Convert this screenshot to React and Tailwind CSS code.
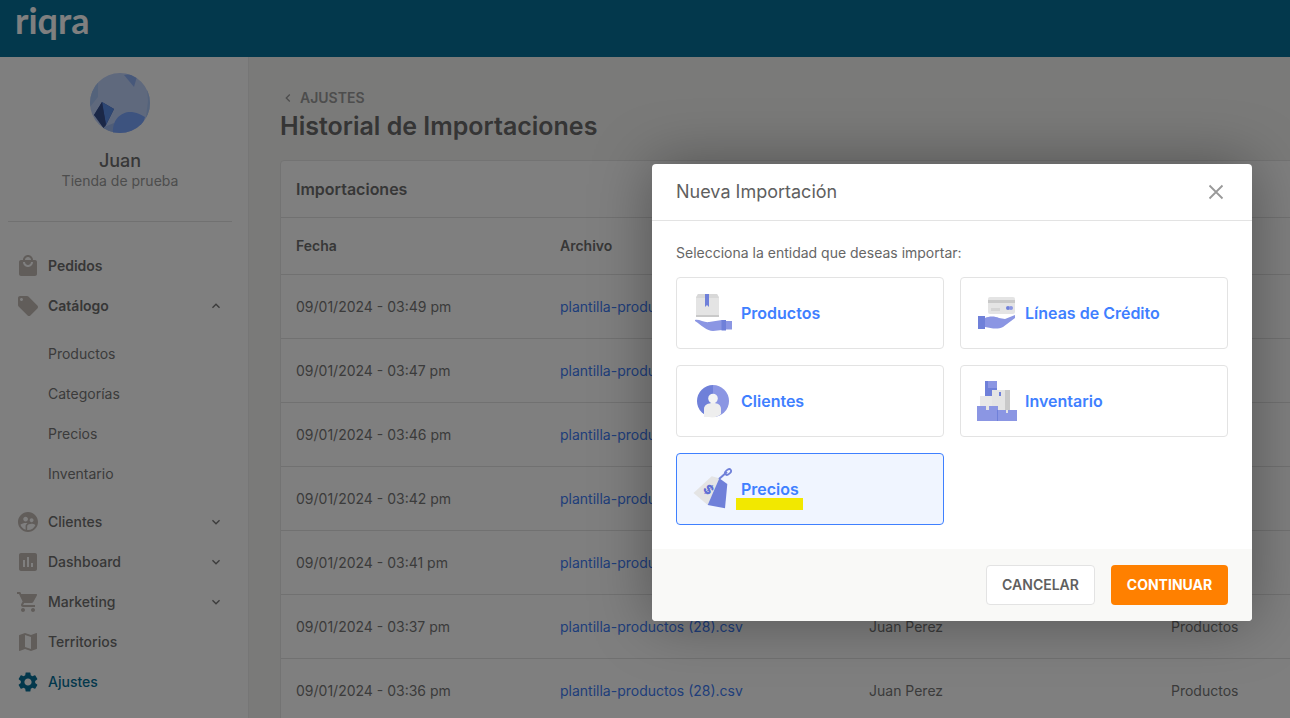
import React from "react";
import { MdLocalMall, MdLocalOffer, MdSupervisedUserCircle, MdAssessment, MdShoppingCart, MdMap, MdSettings, MdKeyboardArrowDown, MdKeyboardArrowUp, MdChevronLeft } from "react-icons/md";

const rows = ["03:49", "03:47", "03:46", "03:42", "03:41", "03:37", "03:36"];

function Nav({ icon: Icon, label, chevron, active, bold }) {
  return (
    <div className={`flex h-10 items-center text-sm ${bold ? "font-semibold" : "font-medium"} ${active ? "text-[#067099]" : "text-[#6f6f6f]"}`}>
      <Icon className={`w-6 h-6 mr-2 ${active ? "text-[#067099]" : "text-[#c2bab5]"}`} />
      <span className="flex-1">{label}</span>
      {chevron === "down" && <MdKeyboardArrowDown className="w-4 h-4 text-[#777]" />}
      {chevron === "up" && <MdKeyboardArrowUp className="w-4 h-4 text-[#777]" />}
    </div>
  );
}

function Sub({ label }) {
  return <div className="flex h-10 items-center pl-8 text-sm text-[#777]">{label}</div>;
}

function Avatar() {
  return (
    <svg width="60" height="60" viewBox="0 0 60 60" className="block">
      <defs><clipPath id="av"><circle cx="30" cy="30" r="30" /></clipPath></defs>
      <g clipPath="url(#av)">
        <rect width="60" height="60" fill="#bfd2fb" />
        <path d="M0 0H22L8 6 8 24 0 34Z" fill="#a9c6f7" />
        <path d="M34 2 48 0 44 14Z" fill="#8fb0f4" />
        <path d="M56 0H60V60H54L58 28Z" fill="#a9c6f7" />
        <path d="M4 42 12 29 24 36 16 52Z" fill="#3c56ad" />
        <path d="M12 29 24 36 16 52Z" fill="#5b8ee8" />
        <path d="M4 42 12 29 16 52 14 56Z" fill="#37508f" />
        <path d="M14 54 24 50 24 60H12Z" fill="#9fbbf0" />
        <path d="M23 60C22 46 32 38 42 39 49 40 53 43 55 44L50 60Z" fill="#7ba6ff" />
      </g>
    </svg>
  );
}

const BLUE = "#6f80d9";
const LIGHT = "#8b96e3";
const GRAY = "#e4e4e4";
const DARKG = "#c9c9c9";

function IconProductos() {
  return (
    <svg width="40" height="40" viewBox="0 0 40 40">
      <path d="M5 1H24L26 4V24H3V4Z" fill={GRAY} />
      <path d="M5 1H24L26 5H3Z" fill="#d8d8d8" />
      <rect x="3" y="22" width="23" height="2" fill={DARKG} />
      <path d="M12 1H16V14L14 12 12 14Z" fill={BLUE} />
      <path d="M2 27C6 26 12 30 16 29L29 27V37L20 38C14 38 8 32 2 28Z" fill={LIGHT} />
      <rect x="28.5" y="27" width="4.5" height="10.5" fill={BLUE} />
      <rect x="33" y="28" width="6" height="8.5" fill={LIGHT} />
    </svg>
  );
}

function IconCredito() {
  return (
    <svg width="40" height="40" viewBox="0 0 40 40">
      <rect x="11" y="4" width="27" height="17" rx="2" fill={GRAY} />
      <rect x="11" y="7" width="27" height="3" fill={DARKG} />
      <rect x="14" y="15" width="9" height="3" fill="#d4d4d4" />
      <circle cx="31" cy="15" r="2" fill={BLUE} />
      <circle cx="34" cy="15" r="2" fill={LIGHT} />
      <rect x="1" y="23" width="7" height="13" fill={BLUE} />
      <path d="M8 25C12 23 18 23 22 25L28 26 38 22 38 25 26 34C20 37 14 35 8 34Z" fill={LIGHT} />
    </svg>
  );
}

function IconClientes() {
  return (
    <svg width="40" height="40" viewBox="0 0 40 40">
      <path d="M20 4A16 16 0 0 0 20 36Z" fill={BLUE} />
      <path d="M20 4A16 16 0 0 1 20 36Z" fill={LIGHT} />
      <path d="M11 36V28C11 24 15 22 20 22 25 22 28 24 28 28V33C25 36 20 37 16 36Z" fill="#eeeeee" />
      <circle cx="20" cy="17.5" r="4.8" fill="#f4f4f4" />
    </svg>
  );
}

function IconInventario() {
  return (
    <svg width="40" height="40" viewBox="0 0 40 40">
      <rect x="8" y="0" width="12" height="16" fill={BLUE} />
      <rect x="11" y="0" width="9" height="7" fill={LIGHT} />
      <rect x="3" y="15" width="13" height="11" fill="#e8e8e8" />
      <rect x="15" y="9" width="18" height="21" fill={GRAY} />
      <rect x="28" y="9" width="5" height="21" fill={DARKG} />
      <rect x="22" y="11" width="2" height="4" fill={BLUE} />
      <rect x="0" y="25" width="21" height="15" fill={LIGHT} />
      <rect x="20" y="29" width="20" height="11" fill={LIGHT} />
      <rect x="20" y="29" width="1" height="11" fill={BLUE} />
      <rect x="9" y="25" width="3" height="4" fill={GRAY} />
      <rect x="29" y="29" width="2" height="3" fill={GRAY} />
    </svg>
  );
}

function IconPrecios() {
  return (
    <svg width="40" height="42" viewBox="0 0 40 42">
      <path d="M0.5 25 18.7 8.3 26.3 10.3 14.7 37Z" fill="#e4e4e4" />
      <path d="M26.3 10.3 34.3 16 32 40.3 14.7 37Z" fill={BLUE} />
      <path d="M26 11 34 4" stroke={BLUE} strokeWidth="2" fill="none" />
      <ellipse cx="35" cy="4" rx="3.5" ry="2.2" transform="rotate(-40 35 4)" stroke={BLUE} strokeWidth="1.8" fill="none" />
      <text x="15.3" y="26" fontSize="13" fontWeight="800" fill="#5f70d4" fontFamily="Inter, sans-serif" textAnchor="middle" transform="rotate(45 15.3 21.7)">$</text>
    </svg>
  );
}

function Option({ icon, label, selected, highlight }) {
  return (
    <div className={`relative flex h-[72px] items-center rounded border px-4 ${selected ? "border-[#3f80ff] bg-[#f0f5ff]" : "border-[#e3e3e3] bg-white"}`}>
      <div className="mr-2 flex h-10 w-10 items-center justify-center">{icon}</div>
      <span className="text-base font-semibold text-[#3f80ff]">{label}</span>
      {highlight && <div className="absolute left-[59px] top-[44px] h-3 w-[67px] bg-[#f2e800]" />}
    </div>
  );
}

export default function App() {
  return (
    <div className="relative h-[718px] w-[1290px] overflow-hidden bg-[#f5f5f3] font-['Inter',sans-serif]">
      <header className="flex h-[57px] items-start bg-[#067099] pl-[15px]">
        <span className="font-['Lato',sans-serif] text-[36px] font-bold leading-[40px] text-white">riqra</span>
      </header>
      <div className="flex h-[661px]">
        <aside className="w-[249px] shrink-0 border-r border-[#ececec] bg-white pl-2 pr-2">
          <div className="flex w-[224px] flex-col items-center pt-4">
            <Avatar />
            <div className="mt-4 text-lg font-medium leading-6 text-[#6f6f6f]">Juan</div>
            <div className="text-sm leading-4 text-[#9a9a9a]">Tienda de prueba</div>
          </div>
          <div className="mt-8 h-px w-[224px] bg-[#e3e3e3]" />
          <nav className="mt-[24px] w-[224px] pl-2 pr-2">
            <Nav icon={MdLocalMall} label="Pedidos" bold />
            <Nav icon={MdLocalOffer} label="Catálogo" chevron="up" bold />
            <div className="py-2">
              <Sub label="Productos" />
              <Sub label="Categorías" />
              <Sub label="Precios" />
              <Sub label="Inventario" />
            </div>
            <Nav icon={MdSupervisedUserCircle} label="Clientes" chevron="down" />
            <Nav icon={MdAssessment} label="Dashboard" chevron="down" />
            <Nav icon={MdShoppingCart} label="Marketing" chevron="down" />
            <Nav icon={MdMap} label="Territorios" />
            <Nav icon={MdSettings} label="Ajustes" active />
          </nav>
        </aside>
        <main className="min-w-0 flex-1 pl-[31px] pt-[33px]">
          <div className="flex h-4 items-center text-sm font-semibold text-[#9a9a9a]">
            <MdChevronLeft className="mr-1 h-4 w-4" />
            AJUSTES
          </div>
          <h1 className="mt-[4px] text-[25px] font-semibold leading-8 text-[#6a6a6a]">Historial de Importaciones</h1>
          <section className="mt-[18px] w-[1100px] rounded border border-[#e6e6e6] bg-white">
            <div className="flex h-[57px] items-center border-b border-[#e3e3e3] px-[15px] text-base font-semibold text-[#6f6f6f]">Importaciones</div>
            <div className="flex h-[57px] items-center border-b border-[#e3e3e3] px-[15px] text-sm font-semibold text-[#6f6f6f]">
              <span className="w-[264px]">Fecha</span>
              <span>Archivo</span>
            </div>
            {rows.map((t) => (
              <div key={t} className="flex h-16 items-center border-b border-[#e3e3e3] px-[15px] text-sm text-[#777]">
                <span className="w-[264px]">09/01/2024 - {t} pm</span>
                <span className="w-[309px] text-[#3f7cf5]">plantilla-productos (28).csv</span>
                <span className="w-[302px]">Juan Perez</span>
                <span>Productos</span>
              </div>
            ))}
          </section>
        </main>
      </div>

      <div className="absolute inset-0 bg-black/50 pl-[652px] pt-[164px]">
        <div className="w-[600px] overflow-hidden rounded bg-white shadow-[0_0_60px_rgba(0,0,0,0.35)]">
          <div className="flex h-[57px] items-center justify-between border-b border-[#e3e3e3] pl-6 pr-[28px]">
            <span className="text-lg text-[#5f5f5f]">Nueva Importación</span>
            <svg width="16" height="16" viewBox="0 0 16 16" stroke="#999999" strokeWidth="1.8" fill="none">
              <path d="M1.5 1.5 14.5 14.5M14.5 1.5 1.5 14.5" />
            </svg>
          </div>
          <div className="h-[328px] px-6 pt-[22px]">
            <p className="text-sm leading-5 text-[#666]">Selecciona la entidad que deseas importar:</p>
            <div className="mt-[14px] grid grid-cols-2 gap-4">
              <Option icon={<IconProductos />} label="Productos" />
              <Option icon={<IconCredito />} label="Líneas de Crédito" />
              <Option icon={<IconClientes />} label="Clientes" />
              <Option icon={<IconInventario />} label="Inventario" />
              <Option icon={<IconPrecios />} label="Precios" selected highlight />
            </div>
          </div>
          <div className="flex h-[72px] items-center justify-end gap-4 bg-[#f9f9f7] pr-6">
            <div className="flex h-10 w-[109px] items-center justify-center rounded border border-[#e3e3e3] bg-white text-sm font-semibold text-[#5f5f5f]">CANCELAR</div>
            <div className="flex h-10 w-[117px] items-center justify-center rounded bg-[#ff8000] text-sm font-bold text-white">CONTINUAR</div>
          </div>
        </div>
      </div>
    </div>
  );
}
